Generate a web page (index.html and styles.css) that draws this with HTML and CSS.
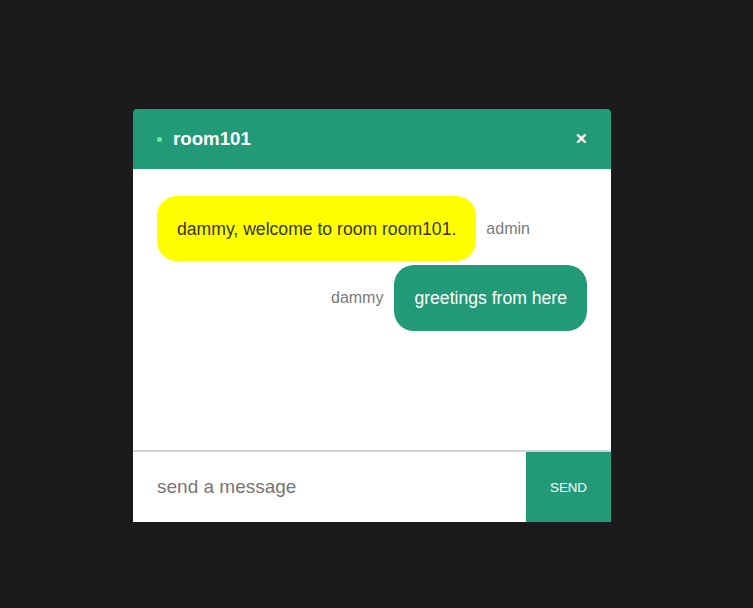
FILE: index.html
```html
<!DOCTYPE html>
<html>
<head>
<meta charset="utf-8">
<link rel="stylesheet" href="styles.css">
</head>
<body>
<div class="page">
  <div class="chat">
    <div class="chat-header">
      <div class="title"><span class="dot"></span><span class="room">room101</span></div>
      <span class="close">✕</span>
    </div>
    <div class="chat-body">
      <div class="msg msg-left">
        <div class="bubble bubble-yellow">dammy, welcome to room room101.</div>
        <span class="author">admin</span>
      </div>
      <div class="msg msg-right">
        <span class="author">dammy</span>
        <div class="bubble bubble-green">greetings from here</div>
      </div>
    </div>
    <div class="chat-input">
      <input class="field" type="text" placeholder="send a message">
      <button class="send">SEND</button>
    </div>
  </div>
</div>
</body>
</html>
```
FILE: styles.css
```css
* { box-sizing: border-box; }
html, body { margin: 0; padding: 0; }
body {
  background: #1b1b1d;
  font-family: "Liberation Sans", Arial, sans-serif;
  width: 753px;
  height: 608px;
  overflow: hidden;
}
.page {
  display: flex;
  padding-top: 109px;
  padding-left: 133px;
}
.chat {
  width: 478px;
  display: flex;
  flex-direction: column;
}
.chat-header {
  height: 60px;
  background: #229a78;
  border-radius: 4px 4px 0 0;
  display: flex;
  align-items: center;
  justify-content: space-between;
  padding: 0 23px 0 24px;
  color: #fff;
}
.title { display: flex; align-items: center; }
.dot {
  width: 5px;
  height: 5px;
  border-radius: 50%;
  background: #6ee7a0;
  margin-right: 11px;
}
.room { font-weight: bold; font-size: 18.7px; }
.close { font-size: 15px; font-weight: bold; }
.chat-body {
  height: 281px;
  background: #fff;
  padding: 27px 24px 0 24px;
  display: flex;
  flex-direction: column;
  gap: 4px;
}
.msg { display: flex; align-items: center; }
.msg-right { justify-content: flex-end; }
.bubble {
  font-size: 17.6px;
  line-height: 20px;
  padding: 22.5px 20px;
  border-radius: 20px;
}
.bubble-yellow { background: #ffff00; color: #353535; }
.bubble-green { background: #229a78; color: #fff; padding-top: 23px; padding-bottom: 23px; }
.author { color: #7a7a7a; font-size: 16px; }
.msg-left .author { margin-left: 10px; }
.msg-right .author { margin-right: 11px; }
.chat-input {
  height: 72px;
  display: flex;
  border-top: 2px solid #d3d3d3;
  background: #fff;
}
.field {
  flex: 1;
  border: none;
  outline: none;
  padding: 0 24px;
  font-family: "Liberation Sans", Arial, sans-serif;
  font-size: 19px;
  color: #333;
  background: #fff;
}
.field::placeholder { color: #767676; }
.send {
  width: 85px;
  border: none;
  background: #229a78;
  color: #fff;
  font-family: "Liberation Sans", Arial, sans-serif;
  font-size: 13.3px;
  padding: 0;
}
```
